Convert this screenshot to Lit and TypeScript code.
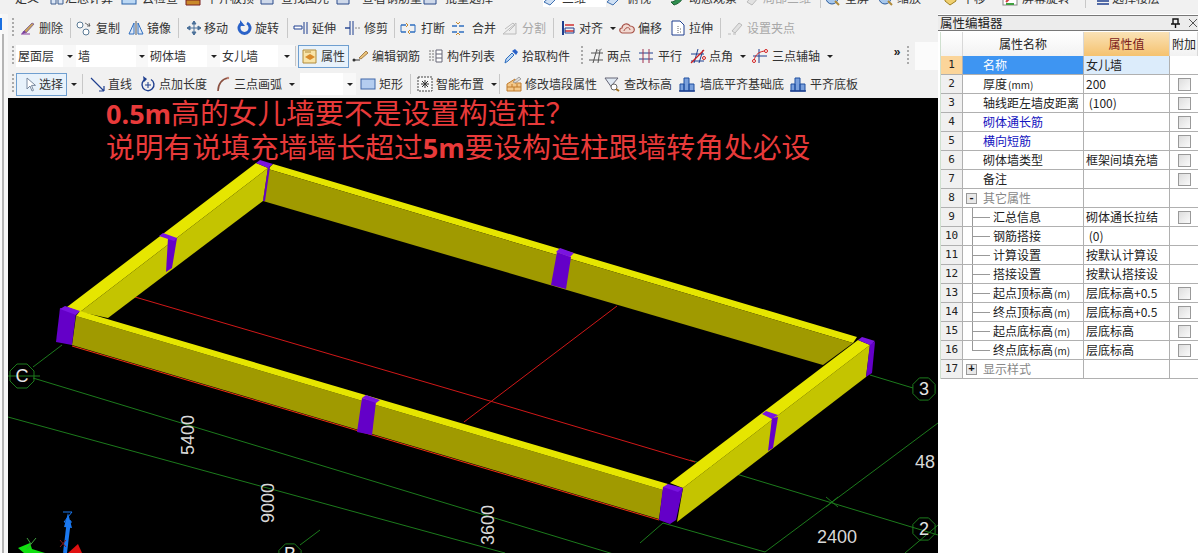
import { LitElement, html, css, svg, nothing } from "lit";
import { customElement } from "lit/decorators.js";

const NAVY = "#1f3f8f";
const BLUE = "#2f6fc0";

const ICONS: Record<string, unknown> = {
  erase: svg`<path d="M2 14h9" stroke="#8a3fa0" fill="none"/><path d="M4 12 13 3l2 1-8 9z" fill="#c9a35a" stroke="#6b4a8f" stroke-width=".7"/><path d="M3 14c0-2 1-3 3-3l1 1c-1 1-2 2-4 2z" fill="#7a3f9f"/>`,
  copy: svg`<circle cx="5" cy="5" r="3" fill="#fff" stroke="#5a7a95"/><circle cx="11" cy="12" r="3" fill="#fff" stroke="#5a7a95"/><path d="M10 3l5 3M15 6l-3 0M15 6l-1-3" stroke="#555" fill="none" stroke-width=".8"/>`,
  mirror: svg`<path d="M8 1v14" stroke="#333" stroke-width=".8"/><path d="M6 3 1 14h5zM10 3l5 11h-5z" fill="#dfe9f7" stroke="${BLUE}"/>`,
  move: svg`<path d="M8 1v14M1 8h14M8 1 6 4h4zM8 15l-2-3h4zM1 8l3-2v4zM15 8l-3-2v4z" stroke="#4a7099" fill="#4a7099"/>`,
  rotate: svg`<path d="M5 3a5.5 5.5 0 1 0 5 0" fill="none" stroke="#2a62c8" stroke-width="3"/><path d="M3 0v6h5z" fill="#2a62c8"/>`,
  extend: svg`<path d="M1 6h8v3H1z" fill="#fff" stroke="${NAVY}"/><path d="M11 2v12M14 2v12" stroke="${NAVY}"/>`,
  trim: svg`<path d="M5 1v14M8 1v14" stroke="${NAVY}"/><path d="M0 8h5" stroke="${NAVY}" stroke-width="1.4"/><path d="M10 8h5" stroke="#888" stroke-dasharray="2 1"/>`,
  brk: svg`<path d="M1 5h5M10 5h5M1 12h5M10 12h5" stroke="${BLUE}" stroke-width="1.6"/><path d="M1 5v7M15 5v7" stroke="${BLUE}"/><path d="M6 3l2 2-2 2M10 10l-2 2 2 2" stroke="#c9892a" fill="none"/>`,
  merge: svg`<path d="M1 6h14M1 12h14" stroke="${BLUE}" stroke-width="1.4" stroke-dasharray="5 2"/><path d="M5 2l2 2 2-2M5 15l2-2 2 2" stroke="#c9892a" fill="none"/>`,
  split: svg`<path d="M1 14 14 3v11z" fill="#eee" stroke="#bbb"/><path d="M3 9l8-6 2 2-6 6" fill="none" stroke="#bbb"/>`,
  align: svg`<path d="M2 1v14" stroke="${NAVY}" stroke-width="2"/><path d="M4 5h9M4 11h9" stroke="#d03030" stroke-width="1.4"/><path d="M4 8h9v5H4z" fill="none" stroke="${NAVY}"/>`,
  offset: svg`<path d="M3 13C0 12 0 8 3 8c0-4 6-6 8-2 3 0 5 2 4 5-1 2-2 2-3 2z" fill="#f1d8d0" stroke="#a8544a" stroke-width="1.2"/><path d="M5 11c0-2 2-2 2-3 2-1 4 0 4 2" fill="none" stroke="#a8544a"/>`,
  stretch: svg`<path d="M2 1h8l4 4v10H2z" fill="#fff" stroke="${NAVY}"/><path d="M8 6v8M10 9h2M10 12h2" stroke="#666" stroke-dasharray="1 1"/>`,
  grip: svg`<path d="M5 11 12 3l3 2-7 8z" fill="#e2e2e2" stroke="#bbb"/><path d="M1 14h3M6 14h3" stroke="#bbb"/>`,
  props: svg`<path d="M1 2h13v13H1z" fill="#f8e4a8" stroke="#b08a3a"/><path d="M3 9l5-3 5 3-5 3z" fill="#d98a2a"/><path d="M3 4h6" stroke="#b08a3a"/>`,
  rebar: svg`<path d="M1 12h7" stroke="#333"/><circle cx="2" cy="12" r="1.5" fill="#333"/><path d="M7 10 14 3l2 2-7 6z" fill="#e8c27a" stroke="#8a5a20" stroke-width=".7"/>`,
  list: svg`<path d="M2 2v12M5 2v12" stroke="#777" stroke-dasharray="2 1"/><path d="M8 2h6v12H8zM8 6h6M8 10h6" fill="#fff" stroke="#667"/>`,
  pick: svg`<path d="M2 15l1-4 6-6 2 2-6 6z" fill="#bcd6f2" stroke="${BLUE}"/><path d="M9 3l4 4 2-3-3-3z" fill="#2a62c8"/>`,
  twopt: svg`<path d="M1 12h14M3 5h12M5 15 9 1M10 15l2-13" stroke="#555" fill="none"/><path d="M9 3l5-2" stroke="#999"/>`,
  para: svg`<path d="M1 5h14M1 11h14" stroke="${NAVY}"/><path d="M5 1v14M11 1v14" stroke="#a03050"/>`,
  angle: svg`<path d="M1 13h13M1 6h13M4 15 8 1M9 15l4-13" stroke="${NAVY}"/><path d="M1 15 14 2" stroke="#d02020" stroke-width="1.3"/><circle cx="14" cy="10" r="1.5" fill="none" stroke="#d02020"/>`,
  arc3: svg`<path d="M1 8h14M7 1v14" stroke="${NAVY}"/><path d="M2 13C3 6 8 3 14 3" fill="none" stroke="#d02020"/><circle cx="2" cy="13" r="1.5" fill="#fff" stroke="#d02020"/><circle cx="14" cy="3" r="1.5" fill="#fff" stroke="#d02020"/>`,
  cursor: svg`<path d="M4 2v11l3-3 2 5 1.500-.6-2-5h4z" fill="#fff" stroke="#7a8aa0"/>`,
  line: svg`<path d="M1 2 14 15M14 15V10M14 15H9" fill="none" stroke="${NAVY}" stroke-width="1.2"/>`,
  ptlen: svg`<path d="M6 3a6 6 0 1 0 5 .5" fill="none" stroke="${NAVY}" stroke-width="1.4"/><path d="M3 0l4 3-3 3z" fill="${NAVY}"/><path d="M8 6v6M5 9h6" stroke="${NAVY}"/>`,
  arc: svg`<path d="M3 15C3 8 7 3 13 2" fill="none" stroke="#8a5040" stroke-width="1.6"/><circle cx="13" cy="2" r="1.200" fill="#c08070"/>`,
  rect: svg`<rect x="1" y="3" width="14" height="10" fill="#b4cdf0" stroke="#3f66a8"/>`,
  smart: svg`<rect x="1" y="1" width="14" height="14" fill="#f8f8f8" stroke="#444" stroke-dasharray="2 1"/><path d="M8 4v8M4 8h8M5 5l6 6M11 5l-6 6" stroke="#333"/>`,
  brick: svg`<path d="M1 8 9 3v4h6v8H1z" fill="#f3c88a" stroke="#c07a2a"/><path d="M1 11h14M6 8v3M11 8v3M8 11v4" stroke="#c07a2a"/><path d="M7 6l6-5 2 2-6 4z" fill="#ddd" stroke="#777" stroke-width=".6"/>`,
  level: svg`<path d="M1 2h13L8 9v3z" fill="#dfe8f2" stroke="#667"/><circle cx="10" cy="11" r="3" fill="#fff" stroke="#666"/><path d="M12 13l3 2" stroke="#a07020" stroke-width="2"/>`,
  base: svg`<path d="M1 15V8h4v7zM5 15V2h5v13zM10 15V8h5v7z" fill="#7aa0dc" stroke="#1f4f9f"/><path d="M0 15h16" stroke="#1f3f8f" stroke-width="1.4"/>`,
  t_cal: svg`<path d="M2 2h5v12H2zM9 2h5v12H9z" fill="#dbe6f5" stroke="#3f5f8f"/>`,
  t_cloud: svg`<rect x="1" y="2" width="14" height="12" fill="#bcd8f4" stroke="#2a62a8"/>`,
  t_box: svg`<path d="M2 2h12v12H2z" fill="#cfd9ea" stroke="#2a4a8a"/>`,
  t_mix: svg`<path d="M1 10h14v5H1z" fill="#c9892a" stroke="#7a2020"/>`,
  t_plane: svg`<path d="M1 12 10 4l5 3-8 8z" fill="#cfe0f4" stroke="#3f70b0"/>`,
  t_orbit: svg`<path d="M1 12C5 12 9 8 12 2l3 3c-3 6-7 9-11 10z" fill="#2f8f4f" stroke="#1f5f35"/>`,
  t_local: svg`<path d="M2 12 9 4l5 3-7 8z" fill="#e2e2e2" stroke="#bbb"/>`,
  t_lens: svg`<circle cx="8" cy="8" r="6" fill="#a8c8ec" stroke="#2a5a9a"/><path d="M11 11l4 4" stroke="#b08a3a" stroke-width="2"/>`,
  t_hand: svg`<path d="M3 2h9l2 9-6 4-5-4z" fill="#f0d070" stroke="#a08020"/>`,
  t_rot: svg`<rect x="1" y="1" width="14" height="14" fill="#fff" stroke="#888"/><path d="M4 12 12 4" stroke="#d04040" stroke-width="2"/><path d="M4 14h8" stroke="#40a040" stroke-width="2"/>`,
  t_menu: svg`<path d="M2 8h12M2 11h12M2 14h12" stroke="${NAVY}" stroke-width="1.6"/>`,
};

type Item =
  | { k: "tool"; label: string; icon: string; w: number; off: number; pad?: number; caret?: boolean; on?: boolean; dim?: boolean }
  | { k: "sep"; w: number }
  | { k: "space"; w: number }
  | { k: "grip"; w: number; at: number }
  | { k: "combo"; label: string; w: number; drop: number }
  | { k: "caret"; w: number };

const t = (label: string, icon: string, w: number, off: number, more: Partial<Extract<Item, { k: "tool" }>> = {}): Item => ({ k: "tool", label, icon, w, off, ...more });
const sep = (w: number): Item => ({ k: "sep", w });
const sp = (w: number): Item => ({ k: "space", w });
const grip = (w: number, at: number): Item => ({ k: "grip", w, at });
const combo = (label: string, w: number, drop: number): Item => ({ k: "combo", label, w, drop });

const TOP: Item[] = [
  sp(15), t("定义", "", 34, 0), t("汇总计算", "t_cal", 72, 16), t("云检查", "t_cloud", 64, 21), t("平齐板顶", "t_mix", 74, 21),
  t("查找图元", "t_box", 76, 22), t("查看钢筋量", "t_box", 87, 27), t("批量选择", "t_box", 121, 23), t("三维", "t_plane", 63, 19, { on: true }),
  t("俯视", "t_plane", 64, 21), t("动态观察", "t_orbit", 75, 19), t("局部三维", "t_local", 75, 18, { dim: true }), sep(4),
  t("全屏", "t_lens", 53, 21), t("缩放", "t_lens", 65, 20), t("平移", "t_hand", 60, 20), t("屏幕旋转", "t_rot", 83, 20), sep(10), t("选择楼层", "t_menu", 80, 17),
];

const ROW1: Item[] = [
  grip(11, 4), t("删除", "erase", 51, 20), sep(5), t("复制", "copy", 53, 21), t("镜像", "mirror", 50, 19), sep(8),
  t("移动", "move", 51, 18), t("旋转", "rotate", 50, 18), sep(6), t("延伸", "extend", 52, 19), t("修剪", "trim", 49, 19), sep(6),
  t("打断", "brk", 51, 21), t("合并", "merge", 51, 21), t("分割", "split", 51, 20, { dim: true }), sep(8),
  t("对齐", "align", 58, 18, { caret: true }), t("偏移", "offset", 51, 19), t("拉伸", "stretch", 50, 19), sep(7),
  t("设置夹点", "grip", 71, 20, { dim: true }),
];

const ROW2: Item[] = [
  grip(8, 4), combo("屋面层", 47, 13), combo("墙", 60, 12), combo("砌体墙", 59, 13), combo("女儿墙", 58, 17), sep(3),
  t("属性", "props", 51, 19, { on: true, pad: 3 }), sp(3), t("编辑钢筋", "rebar", 76, 20), t("构件列表", "list", 75, 19), t("拾取构件", "pick", 74, 19),
  grip(11, 4), t("两点", "twopt", 50, 19), t("平行", "para", 52, 20), t("点角", "angle", 62, 19, { caret: true }), t("三点辅轴", "arc3", 88, 20, { caret: true }),
];

const ROW3: Item[] = [
  grip(8, 4), t("选择", "cursor", 51, 16, { on: true, pad: 6 }), { k: "caret", w: 15 }, sep(8),
  t("直线", "line", 50, 18), t("点加长度", "ptlen", 75, 19), t("三点画弧", "arc", 85, 19, { caret: true }), combo("", 43, 13), sp(4),
  t("矩形", "rect", 50, 19), sep(7), t("智能布置", "smart", 82, 19, { caret: true }), sep(7),
  t("修改墙段属性", "brick", 98, 19), t("查改标高", "level", 75, 20), t("墙底平齐基础底", "base", 111, 21), t("平齐底板", "base", 73, 20),
];

type Row = { name?: string; value?: string; check?: boolean; blue?: boolean; tree?: boolean; last?: boolean; group?: "-" | "+"; sel?: boolean; unit?: string };

const ROWS: Row[] = [
  { name: "名称", value: "女儿墙", sel: true },
  { name: "厚度", unit: "(mm)", value: "200", check: true },
  { name: "轴线距左墙皮距离", value: " (100)", check: true },
  { name: "砌体通长筋", check: true, blue: true },
  { name: "横向短筋", check: true, blue: true },
  { name: "砌体墙类型", value: "框架间填充墙", check: true },
  { name: "备注", check: true },
  { name: "其它属性", group: "-" },
  { name: "汇总信息", value: "砌体通长拉结", check: true, tree: true },
  { name: "钢筋搭接", value: " (0)", tree: true },
  { name: "计算设置", value: "按默认计算设", tree: true },
  { name: "搭接设置", value: "按默认搭接设", tree: true },
  { name: "起点顶标高", unit: "(m)", value: "层底标高+0.5", check: true, tree: true },
  { name: "终点顶标高", unit: "(m)", value: "层底标高+0.5", check: true, tree: true },
  { name: "起点底标高", unit: "(m)", value: "层底标高", check: true, tree: true },
  { name: "终点底标高", unit: "(m)", value: "层底标高", check: true, tree: true, last: true },
  { name: "显示样式", group: "+" },
];

const octagon = (cx: number, cy: number, r: number) => {
  const pts = [];
  for (let i = 0; i < 8; i++) {
    const a = Math.PI / 8 + (i * Math.PI) / 4;
    pts.push(`${(cx + r * Math.cos(a)).toFixed(1)},${(cy + r * Math.sin(a)).toFixed(1)}`);
  }
  return pts.join(" ");
};

@customElement("app-root")
export class AppRoot extends LitElement {
  static override styles = css`
    :host {
      display: block;
      width: 1198px;
      height: 553px;
      overflow: hidden;
      background: #f1f1f1;
      font-family: "Noto Sans CJK SC", "Liberation Sans", sans-serif;
      font-size: 12px;
      color: #333;
    }

    .top {
      display: flex;
      height: 14px;
      overflow: hidden;
    }
    .top .tool {
      height: 18px;
      margin-top: -11px;
      flex: none;
    }
    .top .tool.on {
      background: #fff;
      border: none;
    }
    .top .sep {
      height: 8px;
      margin: 0;
    }

    .main {
      display: grid;
      grid-template-columns: 938px 260px;
      height: 539px;
    }
    .left {
      display: grid;
      grid-template-columns: 8px 930px;
      grid-template-rows: 84px 455px;
    }
    .strip {
      grid-row: 1 / 3;
      background: #f6f6f6;
      display: flex;
      flex-direction: column;
      border-left: 2px solid #fafafa;
    }
    .strip i {
      display: block;
      width: 2px;
      height: 12px;
      margin: 4px 0 0 -2px;
      background: #1a6fe0;
    }
    .strip b {
      display: block;
      flex: 1;
      margin-top: 4px;
      width: 2px;
      background: #b4b4b4;
    }

    .bars {
      display: flex;
      flex-direction: column;
    }
    .row {
      display: flex;
      align-items: center;
      height: 28px;
    }
    .tool {
      display: flex;
      align-items: center;
      flex: none;
      height: 23px;
      box-sizing: border-box;
      white-space: nowrap;
      line-height: 16px;
    }
    .tool.on {
      background: #e8f2fb;
      border: 1px solid #6f9fd0;
    }
    .tool.dim {
      color: #a8a8a8;
    }
    .slot {
      display: flex;
      flex: none;
    }
    .ico {
      display: block;
      width: 16px;
      height: 16px;
    }
    .caret {
      flex: none;
      width: 0;
      height: 0;
      margin-left: 7px;
      border: 3px solid transparent;
      border-top: 3px solid #222;
      border-bottom: 0;
    }
    .sep {
      flex: none;
      height: 20px;
      display: block;
    }
    .sep::before {
      content: "";
      display: block;
      width: 1px;
      height: 100%;
      background: #c8c8c8;
    }
    .space {
      flex: none;
    }
    .gripcell {
      flex: none;
      height: 20px;
    }
    .gripcell::before {
      content: "";
      display: block;
      width: 2px;
      height: 100%;
      margin-left: var(--at);
      background: repeating-linear-gradient(#aaa 0 2px, transparent 2px 4px);
    }
    .combo {
      flex: none;
      display: flex;
      height: 22px;
      line-height: 22px;
    }
    .combo span {
      flex: 1;
      background: #fff;
      padding-left: 2px;
    }
    .combo em {
      flex: none;
      display: flex;
      align-items: center;
      justify-content: center;
      background: #f8f8f8;
    }
    .combo em .caret,
    .caretcell .caret {
      margin: 0;
    }
    .caretcell {
      flex: none;
      display: flex;
      align-items: center;
      padding-left: 4px;
      box-sizing: border-box;
    }
    .more {
      flex: none;
      width: 16px;
      margin-left: 49px;
      margin-top: -8px;
      font: bold 12px "Liberation Sans", sans-serif;
      color: #222;
      text-align: center;
    }
    .tail {
      flex: 1;
      align-self: stretch;
      background: #fbfbfb;
      margin-left: 6px;
    }

    .view {
      position: relative;
      background: #000;
      overflow: hidden;
    }
    .view svg {
      display: block;
    }
    .note {
      position: absolute;
      left: 98px;
      top: -3px;
      color: #e83a3a;
      font-size: 28.8px;
      line-height: 35px;
      white-space: nowrap;
    }
    .note > div {
      height: 35px;
      margin-top: -1px;
    }
    .note b {
      font-family: "Open Sans", sans-serif;
      font-weight: 700;
      font-size: 27px;
      line-height: 1;
    }

    .panel {
      background: #fff;
      display: flex;
      flex-direction: column;
    }
    .title {
      display: flex;
      align-items: center;
      height: 14px;
      margin-top: 1px;
      background: #ececec;
      border-top: 1px solid #777;
      border-bottom: 1px solid #777;
      padding-left: 2px;
      font-size: 12.500px;
      line-height: 14px;
      color: #222;
    }
    .title span {
      flex: 1;
    }
    .title svg {
      flex: none;
      width: 10px;
      height: 10px;
      margin-right: 8px;
    }
    .title svg + svg {
      margin-right: 0;
    }
    .table {
      margin: 1px 0 0 2px;
      border-left: 1px solid #cfe0cf;
    }
    .tr {
      display: grid;
      grid-template-columns: 22px 121px 86px 28px;
      height: 19px;
      box-sizing: border-box;
      border-bottom: 1px solid #b0b0b0;
      line-height: 18px;
      color: #222;
    }
    .tr > div {
      border-right: 1px solid #b0b0b0;
      box-sizing: border-box;
      white-space: nowrap;
      overflow: hidden;
    }
    .tr > div:last-child {
      border-right: 0;
    }
    .tr > div.val {
      white-space: pre;
    }
    .tr.head {
      height: 24px;
      line-height: 23px;
      text-align: center;
      background: linear-gradient(#fff, #f2f2f2);
      border-bottom: 0;
    }
    .tr.head > div {
      border-right: 1px solid #d8d8d8;
    }
    .tr.head .hot {
      background: linear-gradient(#fae2b6, #f5c26f);
      color: #7a1a1a;
    }
    .tr.head .add {
      text-align: left;
      padding-left: 2px;
    }
    .num {
      background: #f0f0f0;
      text-align: center;
      font-size: 11px;
      font-family: "DejaVu Sans Mono", monospace;
    }
    .name {
      padding-left: 20px;
    }
    .name small {
      font-size: 10px;
      margin-left: 1px;
    }
    .val {
      padding-left: 2px;
    }
    .chk {
      display: flex;
      align-items: center;
      justify-content: center;
    }
    .chk i {
      display: block;
      width: 13px;
      height: 13px;
      box-sizing: border-box;
      border: 1px solid #999;
      background: linear-gradient(135deg, #ddd, #fafafa);
    }
    .tr.sel .num {
      background: #fbd59a;
    }
    .tr.sel .name {
      background: #3e95f2;
      color: #fff;
    }
    .tr.sel .val {
      background: #dcecfb;
    }
    .tr.blue .name {
      color: #1414c0;
    }
    .tr.tree .name {
      padding-left: 30px;
      background-image: linear-gradient(#999, #999), linear-gradient(#999, #999);
      background-repeat: no-repeat;
      background-size: 1px 100%, 18px 1px;
      background-position: 9px 0, 9px 50%;
    }
    .tr.last .name {
      background-size: 1px 50%, 18px 1px;
    }
    .tr.group .name {
      display: flex;
      align-items: center;
      padding-left: 3px;
      color: #888;
    }
    .box {
      flex: none;
      width: 11px;
      height: 11px;
      margin-right: 6px;
      box-sizing: border-box;
      border: 1px solid #999;
      background: #e8e8e8;
      color: #111;
      font: bold 11px/8px "Liberation Mono", monospace;
      text-align: center;
    }
  `;

  private _icon(name: string) {
    return name ? html`<svg class="ico" viewBox="0 0 16 16">${ICONS[name]}</svg>` : nothing;
  }

  private _item(it: Item) {
    switch (it.k) {
      case "sep":
        return html`<div class="sep" style="width:${it.w}px"></div>`;
      case "space":
        return html`<div class="space" style="width:${it.w}px"></div>`;
      case "grip":
        return html`<div class="gripcell" style="width:${it.w}px;--at:${it.at}px"></div>`;
      case "caret":
        return html`<div class="caretcell" style="width:${it.w}px"><span class="caret"></span></div>`;
      case "combo":
        return html`<div class="combo" style="width:${it.w + it.drop}px">
          <span>${it.label}</span>
          <em style="width:${it.drop}px"><i class="caret"></i></em>
        </div>`;
      default:
        return html`<div
          class="tool ${it.on ? "on" : ""} ${it.dim ? "dim" : ""}"
          style="width:${it.w}px;padding-left:${it.pad ?? 0}px"
        >
          <span class="slot" style="width:${it.off}px">${this._icon(it.icon)}</span>
          <span>${it.label}</span>
          ${it.caret ? html`<span class="caret"></span>` : nothing}
        </div>`;
    }
  }

  private _scene() {
    const green = [
      "33,378 620,556",
      "8,417 505,553",
      "690,460 938,535",
      "663,523 765,552",
      "640,543 663,523",
      "765,552 938,423",
      "62,345 33,367",
      "8,376 40,376",
      "870,375 913,388",
      "905,553 938,525",
      "300,545 320,530",
      "826,497 838,507",
      "826,507 838,497",
    ];
    const columns = [
      // front-left, back-left, mid-left, back-mid, front-mid, back-right, mid-right, front corner
      { side: "60,308 76,313 72,345 56,342", top: "65,306 80,311 76,315 60,309" },
      { side: "268,167 270,167 265,201 263,201", top: "260,160 273,164 268,168 256,163" },
      { side: "168,238 177,238 172,268 166,272", top: "163,233 177,238 174,241 159,236" },
      { side: "557,252 571,257 566,289 551,285", top: "560,248 574,253 570,257 556,252" },
      { side: "362,398 376,402 372,435 357,432", top: "366,395 380,400 376,403 362,398" },
      { side: "870,343 875,342 872,373 866,377", top: "862,337 875,341 870,345 858,340" },
      { side: "772,418 778,417 773,448 768,451", top: "766,411 778,415 772,419 762,414" },
      { side: "663,487 683,488 676,520 670,524 659,520", top: "668,484 683,488 678,492 663,487" },
    ];
    return svg`
      <g fill="none" stroke="#1c7a1c" stroke-width="1">
        ${green.map((d) => svg`<polyline points=${d}></polyline>`)}
        <polygon points=${octagon(22, 376, 13)}></polygon>
        <polygon points=${octagon(924, 389, 12)}></polygon>
        <polygon points=${octagon(924, 529, 12)}></polygon>
        <polygon points=${octagon(290, 555, 12)}></polygon>
      </g>
      <g fill="none" stroke="#d01818" stroke-width="1">
        <polyline points="135,297 490,401 695,462"></polyline>
        <polyline points="617,306 464,422"></polyline>
      </g>
      <polygon points="273,164 857,337 853,343 268,169" fill="#e6e600"></polygon>
      <polygon points="268,169 853,343 823,365 263,201" fill="#a09a00"></polygon>
      <polygon points="67,307 256,163 268,168 80,312" fill="#e6e600"></polygon>
      <polygon points="80,312 268,168 263,201 108,318" fill="#c4c400"></polygon>
      <polygon points="76,316 663,490 659,519 72,345" fill="#a09a00"></polygon>
      <polygon points="80,311 668,484 663,490 76,316" fill="#e6e600"></polygon>
      <polyline points="72,346 659,520" fill="none" stroke="#f03010" stroke-width="1"></polyline>
      <polygon points="870,345 866,377 677,522 683,488" fill="#c4c400"></polygon>
      <polygon points="858,340 870,345 683,488 670,483" fill="#e6e600"></polygon>
      ${columns.map(
        (c) => svg`<polygon points=${c.side} fill="#6400c8"></polygon>
          <polygon points=${c.top} fill="#7a14e0"></polygon>`,
      )}
      <g fill="#d8d8d8" font-family="Liberation Sans, sans-serif" font-size="18">
        <text transform="translate(194 455) rotate(-90)">5400</text>
        <text transform="translate(274 523) rotate(-90)">9000</text>
        <text transform="translate(494 545) rotate(-90)">3600</text>
        <text x="817" y="543">2400</text>
        <text x="915" y="468">48</text>
      </g>
      <g fill="#e4e4e4" font-family="Liberation Sans, sans-serif" font-size="18" text-anchor="middle">
        <text x="22" y="382">C</text>
        <text x="924" y="395">3</text>
        <text x="924" y="535">2</text>
        <text x="290" y="560">B</text>
      </g>
      <path d="M65 553 69 520" stroke="#1a78f0" stroke-width="4"></path>
      <path d="M68 513 72 528 64 527z" fill="#1a78f0"></path>
      <path d="M63 512h9l-8 10h8" fill="none" stroke="#1a78f0"></path>
      <path d="M18 548 30 543 32 549 45 553 24 553z" fill="#10e010"></path>
      <path d="M27 538 31 544M36 538 27 549" stroke="#3f9f3f" fill="none"></path>
      <path d="M68 553 78 544 82 553z" fill="#e01010"></path>
      <path d="M60 540 66 547M66 540 60 547" stroke="#8f1818" fill="none"></path>
    `;
  }

  override render() {
    return html`
      <div class="top">${TOP.map((i) => this._item(i))}</div>
      <div class="main">
        <div class="left">
          <div class="strip"><i></i><b></b></div>
          <div class="bars">
            <div class="row">${ROW1.map((i) => this._item(i))}</div>
            <div class="row">
              ${ROW2.map((i) => this._item(i))}
              <span class="more">»</span>
              <div class="gripcell" style="width:4px;--at:2px"></div>
              <div class="tail"></div>
            </div>
            <div class="row">${ROW3.map((i) => this._item(i))}</div>
          </div>
          <div class="view">
            <svg width="930" height="455" viewBox="8 98 930 455">${this._scene()}</svg>
            <div class="note">
              <div><b>0.5m</b>高的女儿墙要不是设置构造柱？</div>
              <div>说明有说填充墙墙长超过<b>5m</b>要设构造柱跟墙转角处必设</div>
            </div>
          </div>
        </div>
        <div class="panel">
          <div class="title">
            <span>属性编辑器</span>
            <svg viewBox="0 0 10 10"><path d="M3 1h5v5H3zM1 6h9M5.500 6v4" fill="none" stroke="#111" stroke-width="1.400"></path></svg>
            <svg viewBox="0 0 10 10"><path d="M1 1l8 8M9 1l-8 8" stroke="#555"></path></svg>
          </div>
          <div class="table">
            <div class="tr head">
              <div></div>
              <div>属性名称</div>
              <div class="hot">属性值</div>
              <div class="add">附加</div>
            </div>
            ${ROWS.map(
              (r, i) => html`<div
                class="tr ${r.sel ? "sel" : ""} ${r.blue ? "blue" : ""} ${r.tree ? "tree" : ""} ${r.last ? "last" : ""} ${r.group ? "group" : ""}"
              >
                <div class="num">${i + 1}</div>
                <div class="name">${r.group ? html`<span class="box">${r.group}</span>` : nothing}${r.name}${r.unit ? html`<small>${r.unit}</small>` : nothing}</div>
                <div class="val">${r.value ?? ""}</div>
                <div class="chk">${r.check ? html`<i></i>` : nothing}</div>
              </div>`,
            )}
          </div>
        </div>
      </div>
    `;
  }
}
